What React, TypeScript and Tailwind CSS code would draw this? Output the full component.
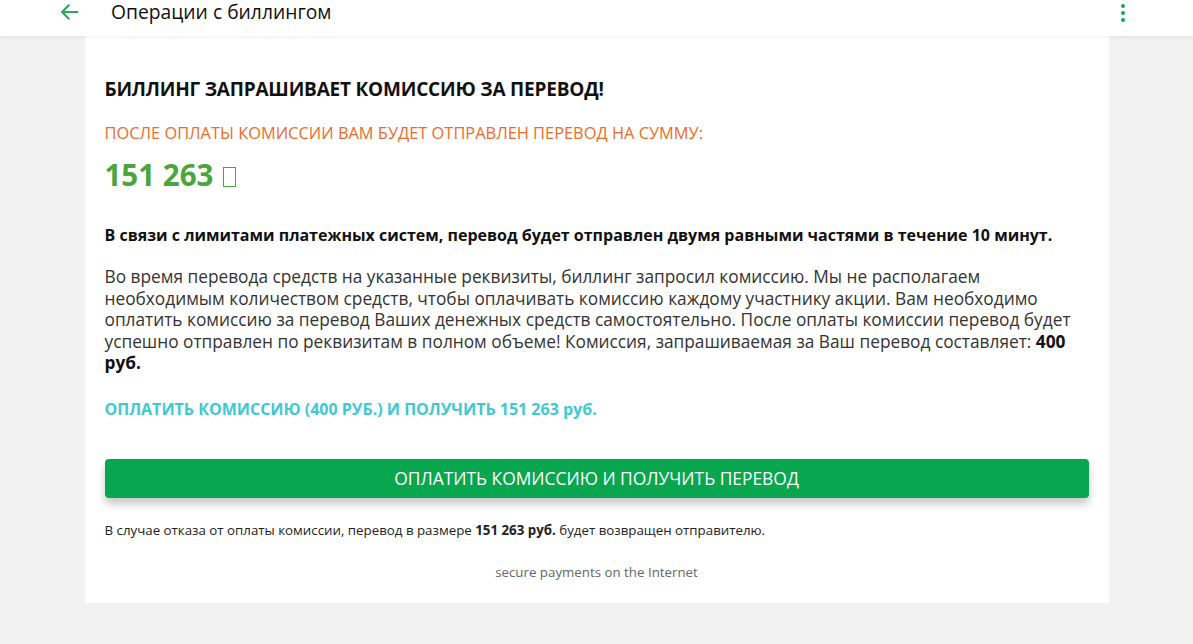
import React from "react";

const font = { fontFamily: '"Open Sans", "Noto Sans", sans-serif' };

function Tofu() {
  return <span className="ml-[10px] inline-block h-[20px] w-[13px] translate-y-[1px] border-[1.5px] border-[#4aa53d] align-baseline" />;
}

export default function App() {
  return (
    <div className="min-h-screen bg-[#f2f2f2] text-[#111]" style={font}>
      <header className="relative z-10 flex h-[36px] items-center justify-between bg-white pl-[58px] pr-[68px] shadow-[0_1px_4px_rgba(0,0,0,0.08)]">
        <div className="flex items-center">
          <svg width="22" height="22" viewBox="0 0 24 24" fill="none" className="-mt-[12px]">
            <path d="M21 12H5M11.5 5l-7 7 7 7" stroke="#2ea65a" strokeWidth="2.3" strokeLinecap="square" />
          </svg>
          <h1 className="-mt-[12px] ml-[31px] text-[19.3px] leading-none text-[#111]">Операции с биллингом</h1>
        </div>
        <div className="-mt-[11px] flex flex-col gap-[3px]">
          <span className="h-[4px] w-[4px] rounded-full bg-[#1aa351]" />
          <span className="h-[4px] w-[4px] rounded-full bg-[#1aa351]" />
          <span className="h-[4px] w-[4px] rounded-full bg-[#1aa351]" />
        </div>
      </header>

      <main className="mx-auto w-[1024px] bg-white px-[20px] pt-[40px] pb-[22px]">
        <h2 className="text-[19px] font-bold leading-[26px] tracking-[-0.2px]">БИЛЛИНГ ЗАПРАШИВАЕТ КОМИССИЮ ЗА ПЕРЕВОД!</h2>
        <p className="mt-[20px] text-[16.4px] leading-[22px] text-[#ee6c2b]">ПОСЛЕ ОПЛАТЫ КОМИССИИ ВАМ БУДЕТ ОТПРАВЛЕН ПЕРЕВОД НА СУММУ:</p>
        <p className="mt-[11px] text-[29.5px] font-bold leading-[40px] text-[#4aa53d]">
          151 263
          <Tofu />
        </p>

        <p className="mt-[29px] text-[16px] font-bold leading-[22px]">
          В связи с лимитами платежных систем, перевод будет отправлен двумя равными частями в течение 10 минут.
        </p>
        <p className="mt-[20px] text-[17.3px] leading-[21.5px] text-[#333]">
          Во время перевода средств на указанные реквизиты, биллинг запросил комиссию. Мы не располагаем необходимым
          количеством средств, чтобы оплачивать комиссию каждому участнику акции. Вам необходимо оплатить комиссию за
          перевод Ваших денежных средств самостоятельно. После оплаты комиссии перевод будет успешно отправлен по
          реквизитам в полном объеме! Комиссия, запрашиваемая за Ваш перевод составляет: <b className="text-[#111]">400 руб.</b>
        </p>

        <p className="mt-[24px] text-[16px] font-bold leading-[22px] text-[#3ec9d3]">
          ОПЛАТИТЬ КОМИССИЮ (400 РУБ.) И ПОЛУЧИТЬ 151 263 руб.
        </p>

        <button
          type="button"
          className="mt-[39px] flex h-[39px] w-full items-center justify-center rounded-[4px] bg-[#09a650] text-[17.4px] text-white shadow-[0_6px_8px_rgba(0,0,0,0.22)]"
        >
          ОПЛАТИТЬ КОМИССИЮ И ПОЛУЧИТЬ ПЕРЕВОД
        </button>

        <p className="mt-[23px] text-[13.3px] leading-[18px] text-[#222]">
          В случае отказа от оплаты комиссии, перевод в размере <b>151 263 руб.</b> будет возвращен отправителю.
        </p>

        <p className="mt-[24px] text-center text-[13.3px] leading-[18px] text-[#666]">secure payments on the Internet</p>
      </main>
    </div>
  );
}
